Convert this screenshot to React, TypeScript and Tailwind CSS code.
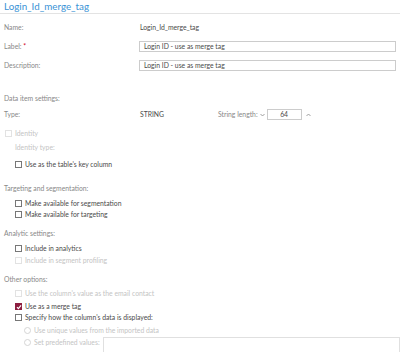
import React from 'react';

function Box({ checked, disabled }: { checked?: boolean; disabled?: boolean }) {
  if (checked) {
    return (
      <span className="inline-flex h-[7px] w-[7px] shrink-0 items-center justify-center bg-[#8c1d40]">
        <svg width="6" height="6" viewBox="0 0 6 6">
          <path d="M1 3.2 L2.4 4.6 L5 1.4" stroke="#fff" strokeWidth="1.2" fill="none" />
        </svg>
      </span>
    );
  }
  return (
    <span
      className={
        'inline-block h-[7px] w-[7px] shrink-0 border ' +
        (disabled ? 'border-[#e2e2e2]' : 'border-[#777]')
      }
    />
  );
}

function Radio() {
  return <span className="inline-block h-[7px] w-[7px] shrink-0 rounded-full border border-[#d5d5d5]" />;
}

function Chevron({ up }: { up?: boolean }) {
  return (
    <svg width="5" height="4" viewBox="0 0 5 4" className="shrink-0">
      <path d={up ? 'M0.5 3 L2.5 1 L4.5 3' : 'M0.5 1 L2.5 3 L4.5 1'} stroke="#888" strokeWidth="0.8" fill="none" />
    </svg>
  );
}

function Check({
  text,
  checked,
  disabled,
  mt,
  outer,
}: {
  text: string;
  checked?: boolean;
  disabled?: boolean;
  mt: string;
  outer?: boolean;
}) {
  return (
    <div className={'flex h-[11px] items-center gap-[3px] whitespace-nowrap ' + mt + (outer ? ' pl-[5px]' : ' pl-[15px]')}>
      <Box checked={checked} disabled={disabled} />
      <span className={disabled ? 'text-[#c4c4c4]' : 'text-[#4a4a4a]'}>{text}</span>
    </div>
  );
}

function Head({ text, mt }: { text: string; mt: string }) {
  return <div className={'flex h-[11px] items-center pl-[4px] text-[#888] ' + mt}>{text}</div>;
}

export default function App() {
  return (
    <div
      className="h-[352px] w-[400px] overflow-hidden whitespace-nowrap bg-white text-[6.8px] leading-none"
      style={{ fontFamily: 'Lato, sans-serif' }}
    >
      <div className="flex h-[14px] items-center border-b border-[#e3e3e3] pl-[4px] text-[9.8px] text-[#3a93d6]">
        Login_Id_merge_tag
      </div>

      <div className="mt-[8px] flex h-[11px] items-center pl-[4px]">
        <span className="w-[136px] text-[#888]">Name:</span>
        <span className="text-[#4a4a4a]">Login_Id_merge_tag</span>
      </div>
      <div className="mt-[8px] flex h-[11px] items-center pl-[4px]">
        <span className="w-[135px] text-[#888]">
          Label: <span className="text-[#d0021b]">*</span>
        </span>
        <div className="flex h-[11px] w-[257px] items-center border border-[#ccc] pl-[4px] text-[#4a4a4a]">
          Login ID - use as merge tag
        </div>
      </div>
      <div className="mt-[8px] flex h-[11px] items-center pl-[4px]">
        <span className="w-[135px] text-[#888]">Description:</span>
        <div className="flex h-[11px] w-[257px] items-center border border-[#ccc] pl-[4px] text-[#4a4a4a]">
          Login ID - use as merge tag
        </div>
      </div>

      <Head text="Data item settings:" mt="mt-[22px]" />
      <div className="mt-[5px] flex h-[11px] items-center pl-[4px]">
        <span className="w-[136px] text-[#888]">Type:</span>
        <span className="w-[78px] text-[#4a4a4a]">STRING</span>
        <span className="text-[#888]">String length:</span>
        <span className="ml-[2px] flex">
          <Chevron />
        </span>
        <div className="ml-[2px] flex h-[11px] w-[35px] items-center justify-center border border-[#ccc] text-[#4a4a4a]">
          64
        </div>
        <span className="ml-[4px] flex">
          <Chevron up />
        </span>
      </div>

      <Check text="Identity" disabled outer mt="mt-[8px]" />
      <div className="mt-[3px] flex h-[11px] items-center pl-[15px] text-[#c4c4c4]">Identity type:</div>
      <Check text="Use as the table's key column" mt="mt-[6px]" />

      <Head text="Targeting and segmentation:" mt="mt-[13px]" />
      <Check text="Make available for segmentation" mt="mt-[4px]" />
      <Check text="Make available for targeting" mt="mt-[0px]" />

      <Head text="Analytic settings:" mt="mt-[8px]" />
      <Check text="Include in analytics" mt="mt-[4px]" />
      <Check text="Include in segment profiling" disabled mt="mt-[1px]" />

      <Head text="Other options:" mt="mt-[8px]" />
      <Check text="Use the column's value as the email contact" disabled mt="mt-[3px]" />
      <Check text="Use as a merge tag" checked mt="mt-[2px]" />
      <Check text="Specify how the column's data is displayed:" mt="mt-[0px]" />
      <div className="mt-[2px] flex h-[11px] items-center gap-[3px] pl-[24px] text-[#c4c4c4]">
        <Radio />
        <span>Use unique values from the imported data</span>
      </div>
      <div className="mt-[1px] flex h-[11px] items-center gap-[3px] pl-[24px] text-[#c4c4c4]">
        <Radio />
        <span className="w-[66px]">Set predefined values:</span>
        <div className="h-[17px] flex-1 self-start border border-[#e0e0e0]" />
      </div>
    </div>
  );
}
